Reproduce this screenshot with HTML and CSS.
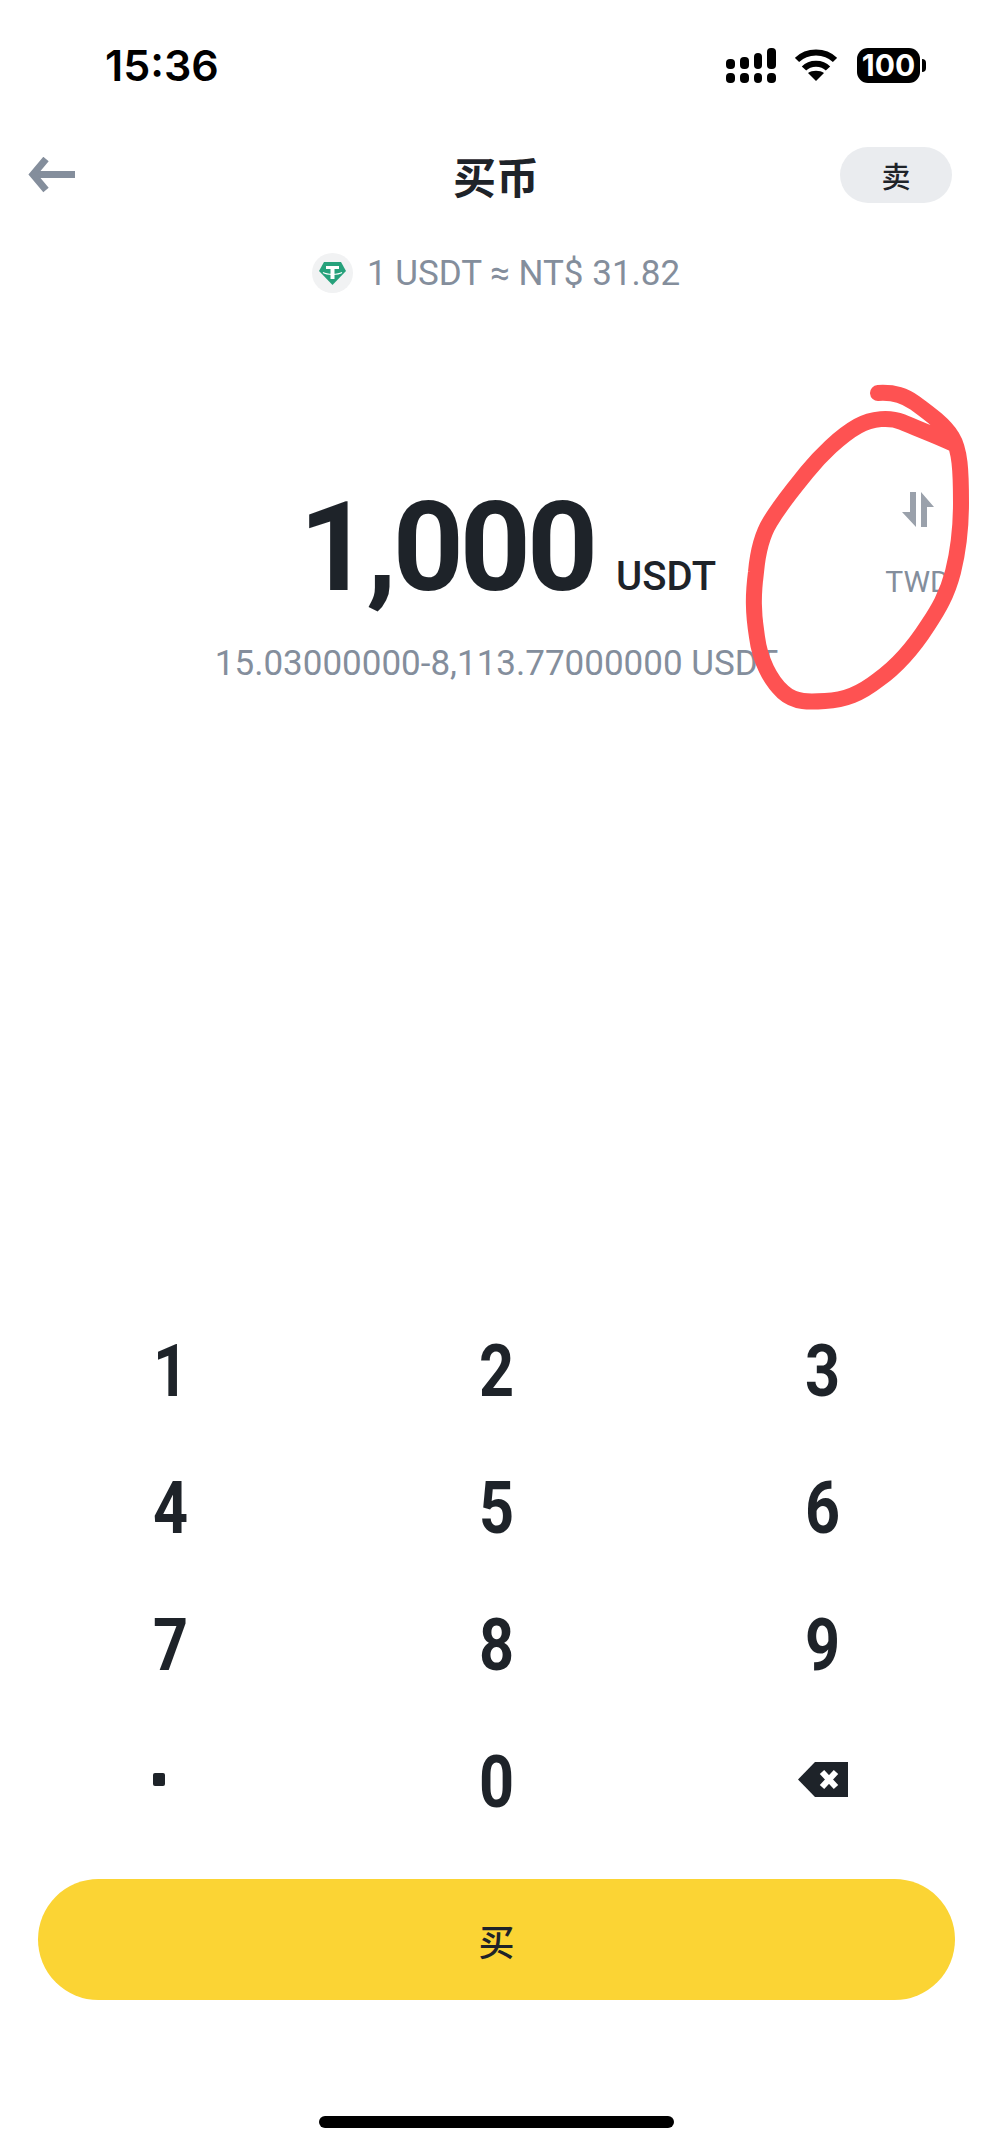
FILE: index.html
```html
<!DOCTYPE html>
<html lang="zh-CN">
<head>
  <meta charset="UTF-8" />
  <meta name="viewport" content="width=device-width,initial-scale=1.0" />
  <title>买币</title>
  <link rel="stylesheet" href="styles.css">
</head>
<body>
  <div class="screen">
    <div class="statusbar">
      <span class="time">15:36</span>
      <div class="status-icons">
        <svg class="signal" width="50" height="35" viewBox="0 0 50 35">
          <rect x="0" y="11" width="9" height="10" rx="4" />
          <rect x="14" y="9" width="9" height="12" rx="4" />
          <rect x="28" y="5" width="8" height="16" rx="4" />
          <rect x="41" y="0" width="9" height="21" rx="4" />
          <rect x="0" y="25" width="9" height="10" rx="4" />
          <rect x="14" y="25" width="9" height="10" rx="4" />
          <rect x="28" y="25" width="8" height="10" rx="4" />
          <rect x="41" y="25" width="9" height="10" rx="4" />
        </svg>
        <svg class="wifi" width="42" height="32" viewBox="0 0 42 32">
          <path d="M2 11 C12 1 30 1 40 11" fill="none" stroke="#000" stroke-width="6" />
          <path d="M9 19.5 C15 13 27 13 33 19.5" fill="none" stroke="#000" stroke-width="6" />
          <path d="M13 24 C17 21 25 21 29 24 L21 32 Z" />
        </svg>
        <div class="battery"><span class="battery-level">100</span><i class="battery-tip"></i></div>
      </div>
    </div>

    <div class="topbar">
      <svg class="back" width="47" height="36" viewBox="0 0 47 36">
        <path d="M47 17.5 H6" fill="none" stroke="#848e9c" stroke-width="7" />
        <path d="M18 2 L5 17.5 L18 33" fill="none" stroke="#848e9c" stroke-width="7" />
      </svg>
      <h1 class="title">买币</h1>
      <button class="sell-btn">卖</button>
    </div>

    <div class="rate">
      <span class="coin">
        <svg width="27" height="23" viewBox="0 0 27 23">
          <path d="M5 0 H22 L27 9 L13.5 23 L0 9 Z" fill="#26a17b" />
          <path d="M7 4 H20 V7 H15.5 V17 H11.5 V7 H7 Z" fill="#fff" />
          <path d="M4 10.5 C8 13 19 13 23 10.5" fill="none" stroke="#fff" stroke-width="1.4" />
        </svg>
      </span>
      <span>1 USDT ≈ NT$ 31.82</span>
    </div>

    <div class="amount-row">
      <div class="amount">
        <span class="amount-value">1,000</span>
        <span class="amount-unit">USDT</span>
      </div>
      <div class="swap">
        <svg width="32" height="35" viewBox="0 0 32 35">
          <path d="M8 0 H14 V35 L0 20 H8 Z" />
          <path d="M19 0 L32 15 H25 V35 H19 Z" />
        </svg>
        <span class="swap-label">TWD</span>
      </div>
    </div>

    <div class="limits">15.03000000-8,113.77000000 USDT</div>

    <div class="spacer"></div>

    <div class="keypad">
      <div class="key"><span>1</span></div>
      <div class="key"><span>2</span></div>
      <div class="key"><span>3</span></div>
      <div class="key"><span>4</span></div>
      <div class="key"><span>5</span></div>
      <div class="key"><span>6</span></div>
      <div class="key"><span>7</span></div>
      <div class="key"><span>8</span></div>
      <div class="key"><span>9</span></div>
      <div class="key"><i class="key-dot"></i></div>
      <div class="key"><span>0</span></div>
      <div class="key">
        <svg width="50" height="35" viewBox="0 0 50 35">
          <path d="M17 0 H50 V35 H17 L0 17.5 Z" fill="#1e2329" />
          <path d="M24 10 L38 25 M38 10 L24 25" fill="none" stroke="#fff" stroke-width="6" />
        </svg>
      </div>
    </div>

    <button class="buy-btn">买</button>
    <div class="home-indicator"></div>

    <!-- hand drawn marker on top of the screenshot -->
    <svg class="scribble" width="993" height="2149" viewBox="0 0 993 2149">
      <path d="M878 393 C895 392 905 396 915 403 C930 414 945 425 952 437 C960 450 961 470 961 503 C961 530 958 552 953 572 C947 595 938 610 928 625 C912 650 895 668 878 680 C860 694 845 700 825 701 C810 702 795 703 783 692 C770 680 760 660 757 637 C753 612 753 595 756 572 C758 550 762 535 770 522 C782 502 795 487 807 472 C820 456 840 436 858 426 C872 418 890 417 902 422 C918 429 935 435 954 444" fill="none" stroke="#fe5252" stroke-width="16" stroke-linecap="round" stroke-linejoin="round" />
    </svg>
  </div>
</body>
</html>
```

FILE: styles.css
```css
* { box-sizing: border-box; margin: 0; padding: 0; }
html, body {
  width: 100%;
  height: 100%;
  background: #fff;
  font-family: Roboto, "Noto Sans CJK SC", sans-serif;
  color: #1e2329;
}
button { border: none; font-family: inherit; color: inherit; }

.screen {
  position: relative;
  height: 2149px;
  overflow: hidden;
  display: flex;
  flex-direction: column;
}

/* status bar */
.statusbar {
  height: 130px;
  padding: 0 73px 0 105px;
  display: flex;
  align-items: center;
  justify-content: space-between;
  color: #000;
}
.time { font-family: Inter, sans-serif; font-size: 43px; font-weight: 600; }
.status-icons { display: flex; align-items: center; }
.signal { margin-right: 19px; }
.wifi { margin-right: 20px; }
.battery {
  position: relative;
  width: 63px;
  height: 35px;
  background: #000;
  border-radius: 11px;
  display: flex;
  align-items: center;
  justify-content: center;
}
.battery-level {
  font-family: Inter, sans-serif;
  font-size: 30px;
  font-weight: 700;
  color: #fff;
}
.battery-tip {
  position: absolute;
  left: 65px;
  top: 11px;
  width: 4px;
  height: 13px;
  background: #000;
  border-radius: 0 6px 6px 0;
}

/* top bar */
.topbar {
  height: 90px;
  padding: 0 41px 0 28px;
  display: grid;
  grid-template-columns: 1fr auto 1fr;
  align-items: center;
}
.title {
  font-family: "Noto Sans CJK SC", sans-serif;
  font-size: 43px;
  font-weight: 700;
  line-height: 1;
  padding-left: 12px;
}
.sell-btn {
  justify-self: end;
  width: 112px;
  height: 56px;
  border-radius: 28px;
  background: #eaecef;
  font-family: "Noto Sans CJK SC", sans-serif;
  font-size: 29px;
  font-weight: 500;
}

/* rate */
.rate {
  margin-top: 33px;
  height: 40px;
  display: flex;
  justify-content: center;
  align-items: center;
  gap: 14px;
  padding-right: 1px;
  font-size: 35px;
  color: #848e9c;
}
.coin {
  width: 41px;
  height: 40px;
  border-radius: 50%;
  background: #f1f2f3;
  display: flex;
  align-items: center;
  justify-content: center;
}

/* amount */
.amount-row {
  margin-top: 190px;
  height: 130px;
  display: grid;
  grid-template-columns: 299px 1fr auto;
  align-items: start;
}
.amount {
  grid-column: 2;
  display: flex;
  align-items: baseline;
  gap: 22px;
  line-height: 130px;
}
.amount-value {
  font-size: 124px;
  font-weight: 700;
  letter-spacing: -4px;
}
.amount-unit { font-size: 40px; font-weight: 500; }
.swap {
  grid-column: 3;
  width: 110px;
  margin: 9px 20px 0 0;
  display: flex;
  flex-direction: column;
  align-items: center;
  gap: 43px;
  fill: #9aa1ab;
  padding-right: 1px;
}
.swap-label { font-size: 30px; color: #848e9c; line-height: 24px; }

.limits {
  margin-top: 30px;
  text-align: center;
  font-size: 35px;
  line-height: 42px;
  color: #848e9c;
}

.spacer { flex: 1; }

/* keypad */
.keypad {
  padding: 0 7px;
  display: grid;
  grid-template-columns: repeat(3, 1fr);
  grid-auto-rows: 137px;
}
.key {
  display: flex;
  align-items: center;
  justify-content: center;
  font-size: 72px;
  font-weight: 700;
}
.key span { display: inline-block; transform: scaleX(.85); margin-top: 5px; }
.key-dot {
  width: 12px;
  height: 13px;
  margin-right: 22px;
  background: #1e2329;
  border-radius: 2px;
}

.buy-btn {
  margin: 31px 38px 0 38px;
  height: 121px;
  border-radius: 61px;
  background: #fbd434;
  font-family: "Noto Sans CJK SC", sans-serif;
  font-size: 36px;
  font-weight: 500;
}
.home-indicator {
  margin: 116px auto 21px;
  width: 355px;
  height: 12px;
  border-radius: 6px;
  background: #000;
}

.scribble {
  position: absolute;
  left: 0;
  top: 0;
  pointer-events: none;
}
```
